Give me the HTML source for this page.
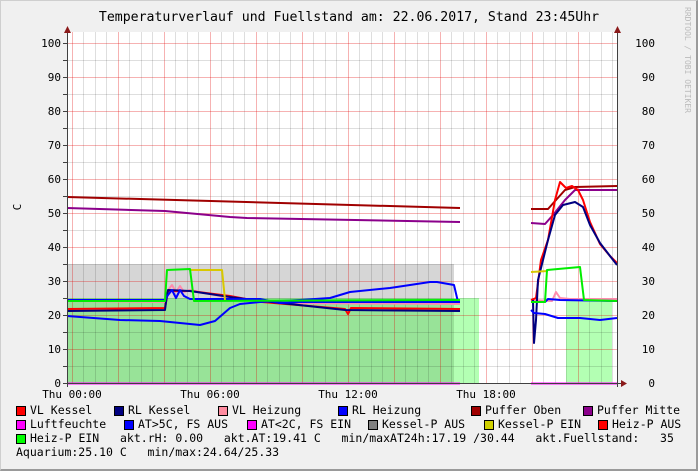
<!DOCTYPE html>
<html><head><meta charset="utf-8"><style>
html,body{margin:0;padding:0}
body{width:698px;height:471px;background:#f0f0f0;position:relative;overflow:hidden;font-family:"DejaVu Sans Mono","Liberation Mono",monospace;color:#000}
.fr{position:absolute;left:0;top:0;border-top:1px solid #cfcfcf;border-left:1px solid #cfcfcf;border-right:2px solid #9a9a9a;border-bottom:2px solid #9a9a9a;box-sizing:border-box;width:698px;height:471px}
.t{position:absolute;white-space:pre;font-size:11.5px;line-height:13px}
.b{position:absolute;width:8px;height:8px;border:1px solid #000}
</style></head><body>
<div class="fr"></div>
<svg width="698" height="471" style="position:absolute;left:0;top:0" xmlns="http://www.w3.org/2000/svg">
<rect x="67" y="32" width="550" height="351" fill="#fff"/>
<rect x="67" y="264" width="387" height="119" fill="#d6d6d6"/>
<rect x="67" y="298" width="387" height="85" fill="#98e398"/>
<rect x="454" y="298" width="25" height="85" fill="#b3ffb3"/>
<rect x="566" y="298" width="46" height="85" fill="#b3ffb3"/>
<g stroke-width="1">
<g stroke="#000" stroke-opacity="0.13">
<path d="M67 366.5H617M67 332.5H617M67 298.5H617M67 264.5H617M67 230.5H617M67 196.5H617M67 162.5H617M67 128.5H617M67 94.5H617M67 60.5H617"/>
<path d="M83.5 32V383M95.5 32V383M106.5 32V383M129.5 32V383M141.5 32V383M152.5 32V383M175.5 32V383M187.5 32V383M198.5 32V383M221.5 32V383M233.5 32V383M244.5 32V383M267.5 32V383M279.5 32V383M290.5 32V383M313.5 32V383M325.5 32V383M336.5 32V383M359.5 32V383M371.5 32V383M382.5 32V383M405.5 32V383M417.5 32V383M428.5 32V383M451.5 32V383M463.5 32V383M474.5 32V383M497.5 32V383M509.5 32V383M520.5 32V383M543.5 32V383M555.5 32V383M566.5 32V383M589.5 32V383M601.5 32V383M612.5 32V383"/>
</g>
<g stroke="#e00000" stroke-opacity="0.3">
<path d="M67 349.5H617M67 315.5H617M67 281.5H617M67 247.5H617M67 213.5H617M67 179.5H617M67 145.5H617M67 111.5H617M67 77.5H617M67 43.5H617"/>
<path d="M72.5 32V383M118.5 32V383M164.5 32V383M210.5 32V383M256.5 32V383M302.5 32V383M348.5 32V383M394.5 32V383M440.5 32V383M486.5 32V383M532.5 32V383M578.5 32V383"/>
</g>
</g>
<g fill="none" stroke-width="2" stroke-linejoin="round">
<path stroke="#a00000" d="M67 197L460 208M531 209L548 209L556 200L565 190L575 187L617 186"/>
<path stroke="#8b008b" d="M67 208L165 211L230 217L247 218L460 222M531 223L545 224L553 215L565 200L575 190L617 190"/>
<path stroke="#ff8cae" d="M67 301L165 302L168 290L172 285L176 292L180 286L184 292L190 290L230 298L280 303L460 304M531 300L552 301L556 292L560 298L570 299L617 299"/>
<path stroke="#ff0000" d="M67 309L165 308L168 291L190 291L230 296L262 302L345 309L348 314L351 308L460 309M531 300L536 298L541 260L548 240L555 200L560 182L566 188L572 186L578 190L583 200L590 222L600 244L610 256L617 263"/>
<path stroke="#000080" d="M67 311L165 310L166 302L168 290L190 291L230 297L262 301L345 310L460 311M533 300L534 343L536 320L538 280L548 240L555 215L563 205L575 202L583 207L590 225L600 243L610 256L617 265"/>
<path stroke="#0000ff" d="M67 300L165 300L168 295L172 290L176 298L180 290L184 296L190 299L260 299L280 303L300 302L460 302M531 302L545 302L548 299L560 300L617 301"/>
<path stroke="#0000ff" d="M67 316L120 320L160 321L200 325L215 321L230 308L240 304L260 302L300 300L330 298L350 292L390 288L410 285L430 282L437 282L454 285L458 302M531 310L534 313L545 314L558 318L580 318L600 320L617 318"/>
<path stroke="#d8c800" d="M190 270L222 270L225 300M531 272L548 271"/>
<path stroke="#00ee00" d="M67 301L165 301L167 270L190 269L194 301L460 300M531 302L545 302L547 270L580 267L584 300L617 301"/>
<path stroke="#ff00ff" d="M67 383.5L460 383.5M531 383.5L617 383.5"/>
</g>
<path stroke="#404040" d="M67.5 32V387M617.5 32V387M63 383.5H621" stroke-width="1"/>
<path d="M64 33L67.5 26L71 33Z M614 33L617.5 26L621 33Z M621 380L627 383.5L621 387Z" fill="#8b1a1a"/>
<path d="M63 366.5H67M63 349.5H67M63 332.5H67M63 315.5H67M63 298.5H67M63 281.5H67M63 264.5H67M63 247.5H67M63 230.5H67M63 213.5H67M63 196.5H67M63 179.5H67M63 162.5H67M63 145.5H67M63 128.5H67M63 111.5H67M63 94.5H67M63 77.5H67M63 60.5H67M63 43.5H67" stroke="#404040"/>
<g font-family="DejaVu Sans Mono, Liberation Mono, monospace" font-size="11" fill="#000">
<g text-anchor="end">
<text x="61" y="387">0</text><text x="61" y="353">10</text><text x="61" y="319">20</text><text x="61" y="285">30</text><text x="61" y="251">40</text><text x="61" y="217">50</text><text x="61" y="183">60</text><text x="61" y="149">70</text><text x="61" y="115">80</text><text x="61" y="81">90</text><text x="61" y="47">100</text>
<text x="655" y="387">0</text><text x="655" y="353">10</text><text x="655" y="319">20</text><text x="655" y="285">30</text><text x="655" y="251">40</text><text x="655" y="217">50</text><text x="655" y="183">60</text><text x="655" y="149">70</text><text x="655" y="115">80</text><text x="655" y="81">90</text><text x="655" y="47">100</text>
</g>
<g text-anchor="middle">
<text x="72" y="398">Thu 00:00</text><text x="210" y="398">Thu 06:00</text><text x="348" y="398">Thu 12:00</text><text x="486" y="398">Thu 18:00</text>
</g>
<text x="18" y="210" transform="rotate(-90 18 207)" text-anchor="middle">C</text>
<text x="349" y="21" text-anchor="middle" font-size="13.2">Temperaturverlauf und Fuellstand am: 22.06.2017, Stand 23:45Uhr</text>
<text x="685" y="7" font-size="8" fill="#bbb" transform="rotate(90 685 7)">RRDTOOL / TOBI OETIKER</text>
</g>
</svg>
<div class="b" style="left:16px;top:406px;background:#f00"></div><div class="t" style="left:30px;top:404px">VL Kessel</div>
<div class="b" style="left:114px;top:406px;background:#000080"></div><div class="t" style="left:128px;top:404px">RL Kessel</div>
<div class="b" style="left:218px;top:406px;background:#ff8ca0"></div><div class="t" style="left:232px;top:404px">VL Heizung</div>
<div class="b" style="left:338px;top:406px;background:#00f"></div><div class="t" style="left:352px;top:404px">RL Heizung</div>
<div class="b" style="left:471px;top:406px;background:#a00000"></div><div class="t" style="left:485px;top:404px">Puffer Oben</div>
<div class="b" style="left:583px;top:406px;background:#8b008b"></div><div class="t" style="left:597px;top:404px">Puffer Mitte</div>
<div class="b" style="left:16px;top:420px;background:#f0f"></div><div class="t" style="left:30px;top:418px">Luftfeuchte</div>
<div class="b" style="left:124px;top:420px;background:#00f"></div><div class="t" style="left:138px;top:418px">AT&gt;5C, FS AUS</div>
<div class="b" style="left:247px;top:420px;background:#f0f"></div><div class="t" style="left:261px;top:418px">AT&lt;2C, FS EIN</div>
<div class="b" style="left:368px;top:420px;background:#808080"></div><div class="t" style="left:382px;top:418px">Kessel-P AUS</div>
<div class="b" style="left:484px;top:420px;background:#d0d000"></div><div class="t" style="left:498px;top:418px">Kessel-P EIN</div>
<div class="b" style="left:598px;top:420px;background:#f00"></div><div class="t" style="left:612px;top:418px">Heiz-P AUS</div>
<div class="b" style="left:16px;top:434px;background:#0f0"></div><div class="t" style="left:30px;top:432px">Heiz-P EIN   akt.rH: 0.00   akt.AT:19.41 C   min/maxAT24h:17.19 /30.44   akt.Fuellstand:   35</div>
<div class="t" style="left:16px;top:446px">Aquarium:25.10 C   min/max:24.64/25.33</div>
</body></html>
